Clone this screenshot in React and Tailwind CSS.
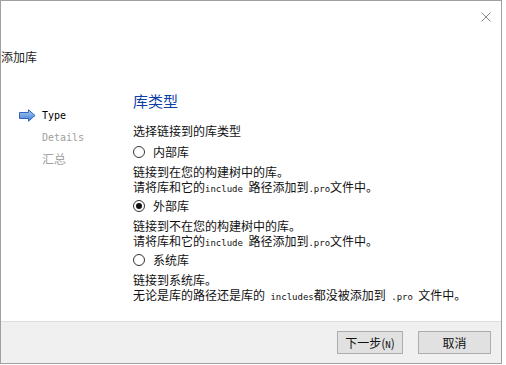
import React from 'react'

const cjk = '"Noto Sans CJK SC", "Liberation Sans", sans-serif'
const mono = '"DejaVu Sans Mono", "Noto Sans CJK SC", monospace'

function Lat({children}){
  return <span className="text-[9px] leading-none whitespace-pre" style={{fontFamily:mono}}>{children}</span>
}

function Radio({checked,label}){
  return <div className="h-5 mt-[2px] flex items-center gap-2">
    <span className="w-3 h-3 rounded-full border border-[#333] bg-white grid place-items-center">
      {checked && <span className="w-[6px] h-[6px] rounded-full bg-[#111]"/>}
    </span>
    <span>{label}</span>
  </div>
}

function Desc({lines}){
  return <div className="mt-[2px]">
    {lines.map((l,i)=><div key={i} className="h-[15px] leading-[15px] whitespace-nowrap">{l}</div>)}
  </div>
}

function Arrow(){
  return <svg width="17" height="13" viewBox="0 0 17 13">
    <defs>
      <linearGradient id="ag" x1="0" y1="0" x2="0" y2="1">
        <stop offset="0" stopColor="#a9cdf5"/>
        <stop offset="1" stopColor="#3f7fd6"/>
      </linearGradient>
    </defs>
    <path d="M0.5 3.5 H9.5 V0.8 L16 6.5 L9.5 12.2 V9.5 H0.5 Z" fill="url(#ag)" stroke="#3366b8" strokeWidth="1"/>
  </svg>
}

const inc = <>请将库和它的<Lat>include </Lat>路径添加到<Lat>.pro</Lat>文件中。</>

export default function App(){
  return <div className="w-[506px] h-[365px] bg-white" style={{fontFamily:cjk}}>
    <div className="w-[502px] h-[364px] border border-[#a0a0a0] flex flex-col text-[12px] text-[#111]">
      <div className="flex-1 relative">
        <button className="absolute right-[9px] top-[10px] w-[12px] h-[12px]">
          <svg width="12" height="12" viewBox="0 0 12 12"><path d="M1.5 1.5 L10.5 10.5 M10.5 1.5 L1.5 10.5" stroke="#8a8a8a" strokeWidth="1"/></svg>
        </button>
        <div className="pt-[48px] leading-[16px] text-[#222]">添加库</div>
        <div className="flex mt-[26px]">
          <div className="w-[132px] pl-[18px] pt-[13px] text-[10px]" style={{fontFamily:mono}}>
            <div className="h-[22px] flex items-center gap-[6px]"><Arrow/><span className="text-black">Type</span></div>
            <div className="h-[22px] flex items-center pl-[23px] text-[#a0a0a0]">Details</div>
            <div className="h-[22px] flex items-center pl-[23px] text-[12px] text-[#a0a0a0]" style={{fontFamily:cjk}}>汇总</div>
          </div>
          <div className="flex-1">
            <div className="text-[15px] leading-[20px] text-[#0d3ea6]">库类型</div>
            <div className="mt-[12px] leading-[16px]">选择链接到的库类型</div>
            <div className="mt-[3px]">
              <Radio label="内部库"/>
              <Desc lines={['链接到在您的构建树中的库。', inc]}/>
              <Radio checked label="外部库"/>
              <Desc lines={['链接到不在您的构建树中的库。', inc]}/>
              <Radio label="系统库"/>
              <Desc lines={['链接到系统库。', <>无论是库的路径还是库的<Lat> includes</Lat>都没被添加到<Lat> .pro </Lat>文件中。</>]}/>
            </div>
          </div>
        </div>
      </div>
      <div className="h-[42px] bg-[#f0f0f0] border-t border-[#dcdcdc] flex justify-end items-start pt-[9px] pr-[10px] gap-[15px]">
        <button className="h-[23px] w-[66px] bg-[#e1e1e1] border border-[#adadad] text-[12px] text-[#111]">下一步(<Lat>N</Lat>)</button>
        <button className="h-[23px] w-[73px] bg-[#e1e1e1] border border-[#adadad] text-[12px] text-[#111]">取消</button>
      </div>
    </div>
  </div>
}
